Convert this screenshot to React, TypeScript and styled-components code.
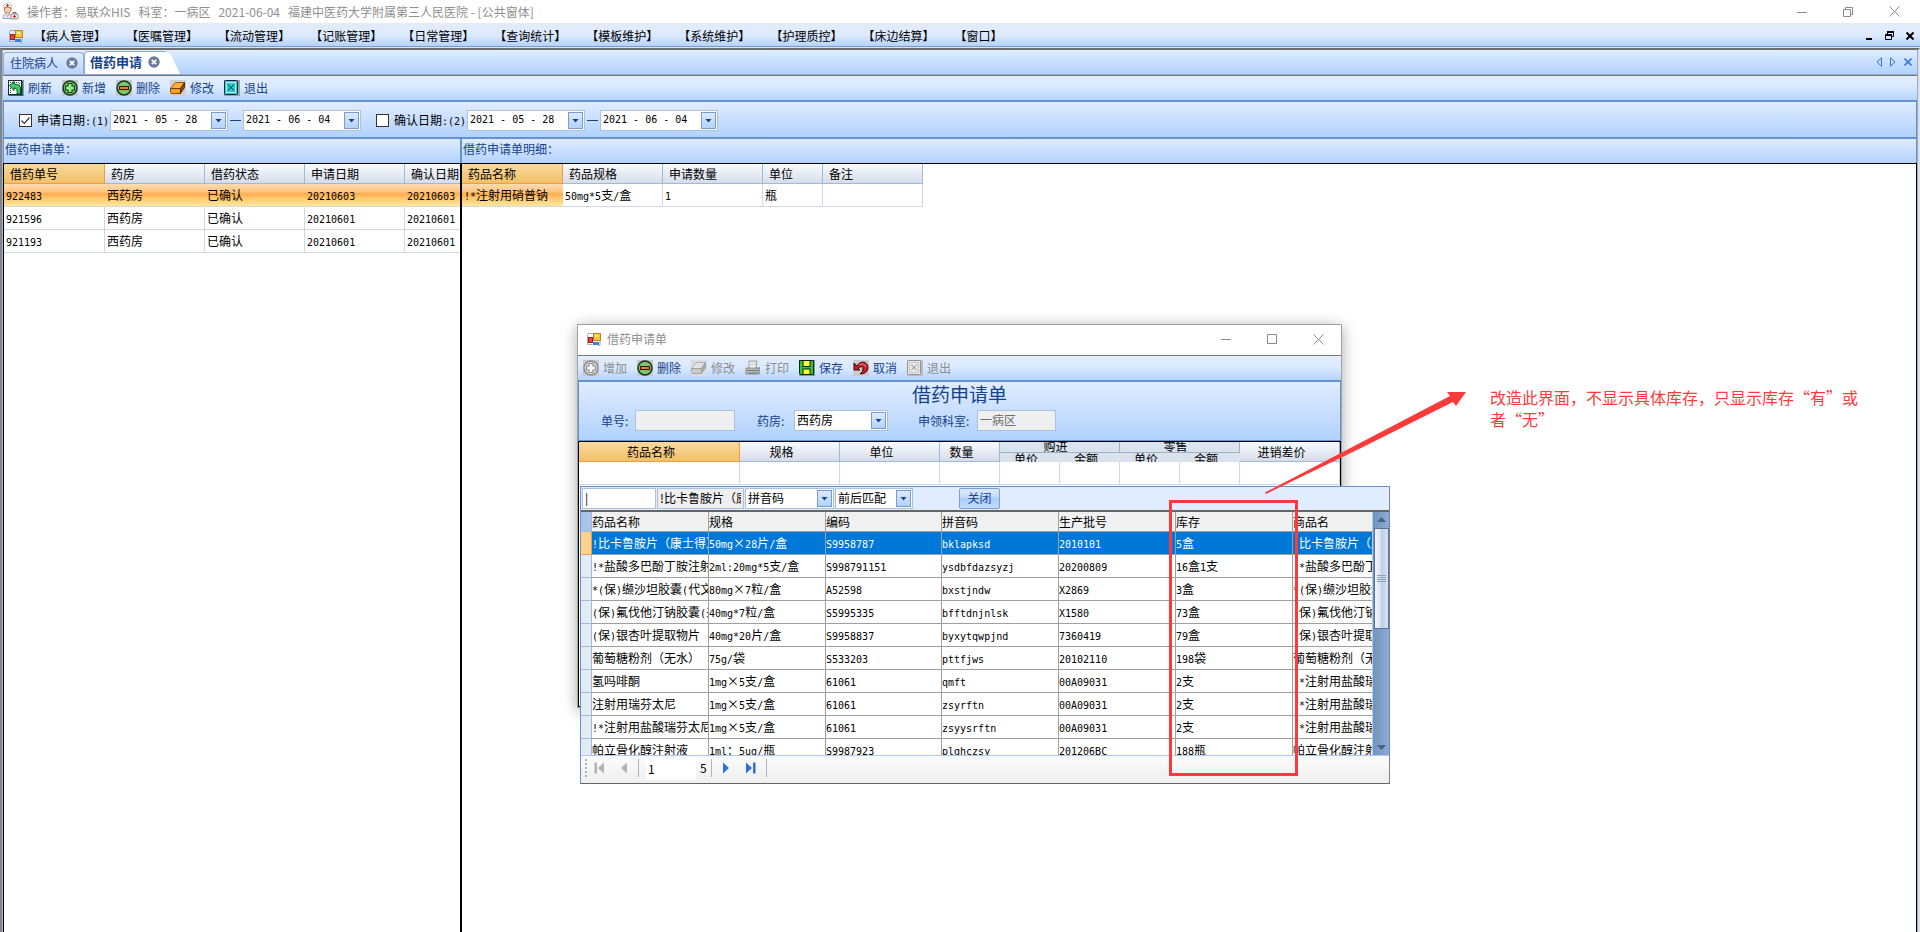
import React from "react";
import styled, { createGlobalStyle, css } from "styled-components";

const GlobalStyle = createGlobalStyle`
  *, *::before, *::after { box-sizing: border-box; }
  html, body { margin: 0; padding: 0; background: #fff; }
  body, button, input, select, table {
    font-family: "Noto Sans CJK SC", "Liberation Sans", sans-serif;
    font-size: 12px;
    line-height: 16px;
    color: #000;
  }
  button { padding: 0; margin: 0; border: 0; background: none; cursor: pointer; }
  svg { display: block; flex: none; }
`;

const navy = "#15428b";
const line = "#6593cf";
const panelFill = "linear-gradient(#e0ecff, #b1d2fe)";
const barFill = "linear-gradient(#e3eeff 0%, #dae9ff 50%, #b3d3fe 100%)";

/* ---------- text ---------- */

const Latin = styled.span`
  font-family: "DejaVu Sans Mono", monospace;
  font-size: 10px;
  line-height: 10px;
`;

function Mixed({ text }: { text: string }) {
  return (
    <>
      {text.split(/([\x21-\x7e]+)/).map((part, i) =>
        i % 2 ? <Latin key={i}>{part}</Latin> : part
      )}
    </>
  );
}

/* ---------- page frame ---------- */

const Page = styled.div`
  position: relative;
  display: flex;
  flex-direction: column;
  min-height: 100vh;
  overflow: hidden;
`;

const TitleBar = styled.header`
  display: flex;
  align-items: center;
  justify-content: space-between;
  height: 23px;
  padding: 0 20px 0 2px;
`;

const TitleText = styled.div`
  display: flex;
  align-items: center;
  gap: 8px;
  color: #8f8f8f;
  white-space: nowrap;
`;

const WindowButtons = styled.div<{ $gap: number }>`
  display: flex;
  align-items: center;
  gap: ${(p) => p.$gap}px;
  button { display: flex; }
`;

const MenuBar = styled.nav`
  display: flex;
  align-items: center;
  justify-content: space-between;
  height: 25px;
  padding: 0 6px 0 9px;
  background: linear-gradient(#e4ebf8 0, #dceaff 50%, #b4d3fc 23px, #6f9fd8 23px, #6f9fd8 24px, #e3e3e3 24px);
`;

const MenuItems = styled.div`
  display: flex;
  align-items: center;
  gap: 20px;
  svg { margin-right: -9px; }
  button { height: 22px; white-space: nowrap; }
`;

const Frame = styled.main`
  flex: 1;
  display: flex;
  flex-direction: column;
  border: solid;
  border-width: 2px 2px 0 2px;
  border-color: #6c6c6c #dfe1e6 #6c6c6c #858585;
`;

const Workspace = styled.div`
  flex: 1;
  display: flex;
  flex-direction: column;
  border-left: 1px solid #9db5da;
  border-right: 1px solid #98aac8;
`;

/* ---------- tabs ---------- */

const TabStrip = styled.div`
  display: flex;
  align-items: flex-end;
  justify-content: space-between;
  height: 25px;
  border-bottom: 1px solid #8fadd6;
  background: ${panelFill};
`;

const Tabs = styled.div`
  display: flex;
  align-items: flex-end;
`;

const Tab = styled.div<{ $active?: boolean }>`
  display: flex;
  align-items: center;
  gap: 8px;
  height: 22px;
  padding: 0 ${(p) => (p.$active ? 20 : 5)}px 2px ${(p) => (p.$active ? 5 : 6)}px;
  background: ${(p) => (p.$active ? "#fff" : "linear-gradient(#dfebfd, #b9d4fa)")};
  border: 1px solid #8fadd6;
  border-bottom: 0;
  border-radius: 4px 4px 0 0;
  ${(p) => p.$active && css`
    gap: 6px;
    height: 23px;
    border-right: 0;
    clip-path: polygon(0 0, calc(100% - 15px) 0, calc(100% - 9px) 4px, 100% 100%, 0 100%);
  `}
  & > button {
    color: ${navy};
    font-size: ${(p) => (p.$active ? 13 : 12)}px;
    font-weight: ${(p) => (p.$active ? 700 : 400)};
  }
`;

const TabTools = styled.div`
  display: flex;
  align-self: center;
  gap: 8px;
  padding-right: 5px;
  button { display: flex; }
`;

/* ---------- toolbars ---------- */

const ToolBar = styled.div`
  display: flex;
  align-items: center;
  gap: 10px;
  height: 27px;
  padding-left: 5px;
  border-top: 1px solid #777;
  border-bottom: 2px solid ${line};
  background: ${barFill};
`;

const ToolButton = styled.button`
  display: flex;
  align-items: center;
  gap: 4px;
  height: 22px;
  color: ${navy};
  white-space: nowrap;
  &:disabled { color: #8d8d8d; }
`;

/* ---------- form controls ---------- */

const FilterBar = styled.div`
  display: flex;
  align-items: center;
  height: 37px;
  padding: 1px 0 0 15px;
  border: solid ${line};
  border-width: 0 1px 2px 1px;
  background: ${panelFill};
`;

const DateGroup = styled.div`
  display: flex;
  align-items: center;
  margin-right: 15px;
`;

const CheckLabel = styled.label`
  display: flex;
  align-items: center;
  gap: 5px;
  width: 91px;
  white-space: nowrap;
`;

const CheckBox = styled.input`
  appearance: none;
  width: 13px;
  height: 13px;
  margin: 0;
  border: 1px solid #333;
  background: #fff;
  &:checked {
    background: #fff
      url("data:image/svg+xml,%3Csvg xmlns='http://www.w3.org/2000/svg' viewBox='0 0 11 11'%3E%3Cpath d='M1.5 5.5l2.800 2.800 5.200-5.800' fill='none' stroke='%23333' stroke-width='1.200'/%3E%3C/svg%3E")
      center / 11px 11px;
  }
`;

const Box = styled.div<{ $width: number }>`
  position: relative;
  display: flex;
  flex: none;
  width: ${(p) => p.$width}px;
  height: 21px;
  border: 1px solid #abc1de;
  background: #fff;
`;

const fieldReset = css`
  appearance: none;
  flex: 1;
  min-width: 0;
  height: 17px;
  padding: 0 18px 0 2px;
  border: 0;
  outline: 0;
  background: none;
`;

const DateInput = styled.input`
  ${fieldReset}
  font-family: "DejaVu Sans Mono", monospace;
  font-size: 10px;
`;

const Select = styled.select`
  ${fieldReset}
`;

const arrowLook = css`
  position: absolute;
  top: 1px;
  right: 1px;
  display: flex;
  align-items: center;
  justify-content: center;
  width: 15px;
  height: 17px;
  border: 1px solid #7a9cc8;
  background: linear-gradient(#dceaff, #b3d2ff);
`;

const ArrowButton = styled.button`${arrowLook}`;
const ArrowMark = styled.span`
  ${arrowLook}
  pointer-events: none;
`;

const Dash = styled.span`
  width: 11px;
  height: 1px;
  margin: 0 2px;
  background: ${navy};
`;

const TextInput = styled.input<{ $width: number }>`
  flex: none;
  width: ${(p) => p.$width}px;
  height: 21px;
  padding: 0 2px 3px;
  border: 1px solid #abc1de;
  outline: 0;
  background: #fff;
  &:read-only { background: #efefef; }
  &:disabled { background: #efefef; color: #6d6d6d; }
`;

const Down = () => (
  <svg width="7" height="5" viewBox="0 0 7 5"><path d="M0.500 1h6L3.500 4.500z" fill={navy} /></svg>
);

function DateBox({ value, label }: { value: string; label: string }) {
  return (
    <Box $width={118}>
      <DateInput defaultValue={value} aria-label={label} />
      <ArrowButton aria-label={label + " 选择"}><Down /></ArrowButton>
    </Box>
  );
}

function Combo({ value, width, id, label }: { value: string; width: number; id?: string; label?: string }) {
  return (
    <Box $width={width}>
      <Select id={id} aria-label={label} defaultValue={value}><option>{value}</option></Select>
      <ArrowMark><Down /></ArrowMark>
    </Box>
  );
}

/* ---------- panels and grids ---------- */

const Panels = styled.div`
  flex: 1;
  display: flex;
`;

const Panel = styled.section<{ $width?: number }>`
  display: flex;
  flex-direction: column;
  flex: ${(p) => (p.$width ? `0 0 ${p.$width}px` : "1 1 0")};
  min-width: 0;
  section + & > * { border-left-width: 2px; }
`;

const PanelTitle = styled.h2`
  height: 24px;
  margin: 0;
  padding: 0 0 0 1px;
  border: solid ${line};
  border-width: 0 0 0 1px;
  background: ${panelFill};
  color: ${navy};
  font-size: 12px;
  font-weight: 400;
  line-height: 20px;
  section:last-child > & { border-right-width: 1px; }
`;

const PanelBody = styled.div`
  flex: 1;
  overflow: hidden;
  border: solid #000;
  border-width: 1px 0 0 1px;
  section:last-child > & { border-right-width: 1px; }
`;

const Grid = styled.table`
  table-layout: fixed;
  width: 0;
  border-collapse: separate;
  border-spacing: 0;
  td, th {
    overflow: hidden;
    white-space: nowrap;
    font-weight: 400;
    text-align: left;
  }
`;

const orangeHead = css`
  border-color: #f29a45;
  background: linear-gradient(#f9d99f, #f1c166);
`;

const hotFill = "linear-gradient(#fbdcb4 0%, #ffc47e 35%, #ffad50 45%, #ffc870 65%, #ffe79c 100%)";

const Head = styled.th<{ $hot?: boolean; $center?: boolean }>`
  height: 20px;
  padding: ${(p) => (p.$center ? "1px 20px 0 4px" : "1px 6px 0")};
  border: solid #9fb9d8;
  border-width: 0 1px 1px 0;
  background: linear-gradient(#f9fbfd, #d6dcea);
  line-height: 18px;
  ${(p) => p.$hot && orangeHead}
  && { text-align: ${(p) => (p.$center ? "center" : "left")}; }
`;

const Cell = styled.td<{ $hot?: boolean }>`
  height: 23px;
  padding: 0 0 0 2px;
  border: solid #d0d7e5;
  border-width: 0 1px 1px 0;
  line-height: 20px;
  ${(p) => p.$hot && css`
    border-right-color: transparent;
    background: ${hotFill};
    background-clip: border-box;
  `}
`;

function Cols({ widths }: { widths: number[] }) {
  return <colgroup>{widths.map((w, i) => <col key={i} style={{ width: w }} />)}</colgroup>;
}

/* ---------- request window ---------- */

const Dialog = styled.section`
  position: absolute;
  left: 577px;
  top: 324px;
  display: flex;
  flex-direction: column;
  width: 765px;
  height: 384px;
  border: 1px solid #a3a3a3;
  background: #fff;
  box-shadow: 0 3px 14px rgba(0, 0, 0, 0.35);
`;

const DialogTitle = styled.div`
  display: flex;
  align-items: center;
  justify-content: space-between;
  height: 30px;
  padding: 0 17px 2px 9px;
  color: #8f8f8f;
  & > span { display: flex; align-items: center; gap: 6px; }
`;

const FormArea = styled.div`
  height: 59px;
  border: solid ${line};
  border-width: 0 1px 1px 1px;
  background: ${panelFill};
`;

const FormTitle = styled.h1`
  margin: 0;
  color: ${navy};
  font-size: 19px;
  font-weight: 400;
  line-height: 24px;
  text-align: center;
`;

const FormRow = styled.div`
  display: flex;
  padding: 4px 0 0 22px;
`;

const Field = styled.div<{ $gap: number; $label: number }>`
  display: flex;
  align-items: center;
  margin-right: ${(p) => p.$gap}px;
  label {
    width: ${(p) => p.$label}px;
    color: ${navy};
    white-space: nowrap;
  }
`;

const DialogBody = styled.div`
  flex: 1;
  overflow: hidden;
  border: 1px solid #000;
`;

const GroupHead = styled.th<{ $part: "top" | "bottom" }>`
  height: ${(p) => (p.$part === "top" ? 11 : 9)}px;
  padding: 0;
  border: solid #9fb0c4;
  border-width: ${(p) => (p.$part === "top" ? "0 1px 1px 0" : "0")};
  background: #dae2ee;
  && { text-align: center; }
  & > div {
    display: flex;
    justify-content: center;
    align-items: ${(p) => (p.$part === "top" ? "flex-end" : "flex-start")};
    height: ${(p) => (p.$part === "top" ? 10 : 9)}px;
    padding-right: 8px;
    overflow: hidden;
    line-height: 12px;
  }
`;

/* ---------- drug picker ---------- */

const Picker = styled.section`
  position: absolute;
  left: 580px;
  top: 486px;
  display: flex;
  flex-direction: column;
  width: 810px;
  height: 298px;
  border: solid;
  border-width: 1px;
  border-color: ${line} #6f86a8 #666 ${line};
  background: #e0ecff;
`;

const SearchBar = styled.div`
  display: flex;
  align-items: center;
  gap: 1px;
  height: 23px;
  padding: 0 1px;
`;

const CloseButton = styled.button`
  width: 41px;
  height: 21px;
  margin-left: 45px;
  padding-bottom: 2px;
  border: 1px solid #7a9fd0;
  border-radius: 2px;
  background: linear-gradient(#dbe8fd 0%, #c3dafc 45%, #aaccfb 50%, #c4dcff 100%);
  color: ${navy};
`;

const PickerView = styled.div`
  display: flex;
  height: 246px;
  border: solid #666;
  border-width: 2px 0 0 0;
  border-bottom: 1px solid #a9cbf5;
  background: #fff;
`;

const PickerGridClip = styled.div`
  flex: 1;
  overflow: hidden;
`;

const PickHead = styled.th`
  height: 20px;
  padding: 1px 0 0;
  border: solid #a0a0a0;
  border-width: 0 1px 1px 0;
  background: #f0f0f0;
  line-height: 18px;
`;

const PickCell = styled.td<{ $selected?: boolean }>`
  height: 23px;
  padding: 0;
  border: solid #a0a0a0;
  border-width: 0 1px 1px 0;
  line-height: 20px;
  ${(p) => p.$selected && css`
    background: #0078d7;
    color: #fff;
  `}
`;

const RowMark = styled.th<{ $kind?: "corner" | "current" }>`
  padding: 0;
  border: solid #9ebce0;
  border-width: 0 1px 1px 0;
  background: #e3ebf7;
  ${(p) => p.$kind === "corner" && css`background: #a9c4e9;`}
  ${(p) => p.$kind === "current" && css`
    border-color: #f29a45;
    background: #ffd28c;
  `}
`;

const ScrollTrack = styled.div`
  display: flex;
  flex-direction: column;
  align-items: center;
  width: 17px;
  padding: 5px 0;
  border-left: 1px solid #a9cbf5;
  background: linear-gradient(90deg, #7393be, #8cabd5);
`;

const ScrollThumb = styled.div`
  display: flex;
  align-items: center;
  justify-content: center;
  width: 15px;
  height: 101px;
  margin: 6px 0 auto;
  border: 1px solid #5c7396;
  background: linear-gradient(90deg, #f2f6fb, #dbe5f3 40%, #c0cfe4 50%, #d8e3f1);
`;

const Pager = styled.div`
  display: flex;
  align-items: center;
  height: 27px;
  padding: 0 0 3px 4px;
  background: linear-gradient(#fbfbfb, #efefef);
  button { display: flex; justify-content: center; width: 23px; }
  input {
    width: 50px;
    height: 23px;
    margin: 0 4px 0 3px;
    padding: 0 2px;
    border: 0;
    outline: 0;
    background: #fff;
  }
`;

const Rule = styled.span`
  width: 1px;
  height: 18px;
  margin: 0 4px;
  background: #b5b5b5;
`;

/* ---------- review note ---------- */

const Highlight = styled.div`
  position: absolute;
  left: 1169px;
  top: 500px;
  width: 129px;
  height: 276px;
  border: 3px solid #fb3b3b;
`;

const ArrowDrawing = styled.svg`
  position: absolute;
  left: 1260px;
  top: 388px;
`;

const Note = styled.p`
  position: absolute;
  left: 1490px;
  top: 386px;
  width: 370px;
  margin: 0;
  color: #fb3b3b;
  font-size: 16px;
  line-height: 22px;
`;

/* ---------- icons ---------- */

const FormIcon = () => (
  <svg width="14" height="14" viewBox="0 0 14 14">
    <path d="M1 1.500h5M0.500 2v10.500h5M13 9v4.500h-2" fill="none" stroke="#a9a9a9" />
    <rect x="1.500" y="5.500" width="4" height="5" fill="#e04a3c" stroke="#a81e16" />
    <rect x="6.500" y="1.500" width="7" height="7" fill="#f9c62f" stroke="#b58a1c" />
    <rect x="8" y="3" width="3" height="2" fill="#ffeaa0" />
    <rect x="6" y="10" width="6" height="3" fill="#3f7ce0" />
  </svg>
);

const NurseIcon = () => (
  <svg width="17" height="17" viewBox="0 0 17 17">
    <path d="M1.500 4.500q-.5-3 2.500-4 3-1 5.500 1.500l-.5 3q-4-2-7.500-.5z" fill="#fff" stroke="#a9b4c0" strokeWidth="0.800" />
    <path d="M4 2.500h3M5.500 1v3" stroke="#e03030" />
    <path d="M2.500 5q3-1.800 6.500 0 .8 5-3.300 5T2.500 5z" fill="#f6cfae" stroke="#9b6238" strokeWidth="0.800" />
    <path d="M1 15.500q-.3-5 4.500-5.500 4.500.5 4.700 5.500z" fill="#dfeaf4" stroke="#7d97b3" strokeWidth="0.800" />
    <path d="M4 10.500l1.700 3 1.600-3" fill="#fff" stroke="#d45a4a" strokeWidth="0.700" />
    <path d="M11 11V9.500h3V11" fill="none" stroke="#666" />
    <rect x="9" y="11" width="7" height="5" rx="1" fill="#ededed" stroke="#777" strokeWidth="0.800" />
    <path d="M12.500 12v3M11 13.500h3" stroke="#d22" />
  </svg>
);

const Minimize = () => (
  <svg width="10" height="10" viewBox="0 0 10 10"><path d="M0 5.500h10" stroke="#8a8a8a" /></svg>
);
const Restore = () => (
  <svg width="10" height="10" viewBox="0 0 10 10">
    <path d="M0.500 2.500h7v7h-7zM2.500 2.500v-2h7v7h-2" fill="none" stroke="#8a8a8a" />
  </svg>
);
const Maximize = () => (
  <svg width="10" height="10" viewBox="0 0 10 10"><path d="M0.500 0.500h9v9h-9z" fill="none" stroke="#8a8a8a" /></svg>
);
const Close = () => (
  <svg width="11" height="11" viewBox="0 0 11 11"><path d="M0.500 0.500l10 10M10.500 0.500l-10 10" stroke="#8a8a8a" /></svg>
);
const MdiMinimize = () => (
  <svg width="8" height="10" viewBox="0 0 8 10"><path d="M1 8h6" stroke="#000" strokeWidth="2" /></svg>
);
const MdiRestore = () => (
  <svg width="9" height="9" viewBox="0 0 9 9">
    <path d="M0.500 4.500h6v4h-6zM2.500 3V0.500h6v5H7" fill="none" stroke="#000" />
    <path d="M0 4h7M2 1h7" stroke="#000" strokeWidth="2" />
  </svg>
);
const MdiClose = () => (
  <svg width="8" height="8" viewBox="0 0 8 8"><path d="M0.500 0.500l7 7M7.500 0.500l-7 7" stroke="#000" strokeWidth="2" /></svg>
);
const TabClose = () => (
  <svg width="12" height="12" viewBox="0 0 12 12">
    <circle cx="6" cy="6" r="5.700" fill="#6b7c99" />
    <path d="M3.800 3.800l4.400 4.400M8.200 3.800l-4.400 4.400" stroke="#fff" strokeWidth="1.800" />
  </svg>
);
const TabArrow = ({ left }: { left?: boolean }) => (
  <svg width="6" height="10" viewBox="0 0 6 10">
    <path d={left ? "M5.500 0.800v8.400L1 5z" : "M0.500 0.800v8.400L5 5z"} fill="none" stroke="#2f78dc" />
  </svg>
);
const TabX = () => (
  <svg width="8" height="10" viewBox="0 0 8 10"><path d="M0.500 1.500l7 7M7.500 1.500l-7 7" stroke="#2f78dc" strokeWidth="1.600" /></svg>
);

const Icon = ({ children }: { children: React.ReactNode }) => (
  <svg width="16" height="16" viewBox="0 0 16 16">{children}</svg>
);
const RefreshIcon = () => (
  <Icon>
    <rect width="16" height="16" fill="#8b9ea3" />
    <rect x="0.500" y="0.500" width="13" height="14" fill="#fff" stroke="#1d2b30" />
    <path d="M2 2.500h10M11.500 3v4M2.500 8v5" stroke="#444" strokeDasharray="1 1" />
    <path d="M1.500 5.500L6 1.500V4q6 0 6.500 4v6H9q1-6-3-6v2.500z" fill="#2ed45e" stroke="#0a3d1b" strokeWidth="0.900" />
    <path d="M14.500 1v14M1 15.500h14" stroke="#2d6a78" />
  </Icon>
);
const AddIcon = ({ off }: { off?: boolean }) => (
  <Icon>
    <rect width="16" height="16" fill="#c4c8cc" />
    <circle cx="8" cy="8" r="7" fill={off ? "#dedede" : "#7cc36a"} stroke={off ? "#8b8b8b" : "#15331a"} strokeWidth="1.500" />
    <path d="M6 3.500h4V6h2.500v4H10v2.500H6V10H3.500V6H6z" fill={off ? "#f3f3f3" : "#8ff08a"} stroke={off ? "#8b8b8b" : "#123a14"} strokeWidth="1.100" />
  </Icon>
);
const RemoveIcon = () => (
  <Icon>
    <rect width="16" height="16" fill="#c4c8cc" />
    <circle cx="8" cy="8" r="7" fill="#7fc467" stroke="#15331a" strokeWidth="1.500" />
    <rect x="3.500" y="6.500" width="9" height="3" fill="#f07a1c" stroke="#2d1405" />
  </Icon>
);
const EraseIcon = ({ off }: { off?: boolean }) => (
  <Icon>
    <rect width="16" height="16" fill={off ? "#d9dde3" : "#d3d0cc"} />
    <path d="M5.500 2.500h9l-4 6h-10z" fill={off ? "#e3e3e3" : "#ffae35"} stroke={off ? "#a5a5a5" : "#7a4508"} strokeWidth="0.800" />
    <path d="M0.500 8.500h10v5h-9l-1-1z" fill={off ? "#c9c9c9" : "#f99f1f"} stroke={off ? "#999" : "#5b3206"} strokeWidth="0.800" />
    <path d="M14.500 2.500v5l-4 6v-5z" fill={off ? "#adadad" : "#8f4c08"} stroke={off ? "#999" : "#3b1f03"} strokeWidth="0.800" />
  </Icon>
);
const ExitIcon = ({ off }: { off?: boolean }) => (
  <Icon>
    <rect width="16" height="16" fill={off ? "#bdbdbd" : "#8fa3ab"} />
    <rect x="0.500" y="0.500" width="13" height="14" rx="1" fill={off ? "#e9e9e9" : "#38c6cf"} stroke={off ? "#909090" : "#0b2b38"} />
    <rect x="2.500" y="2.500" width="9" height="10" fill="none" stroke={off ? "#c9c9c9" : "#9df2f2"} />
    <path d="M4 4.500l6 6M10 4.500l-6 6" stroke={off ? "#8a8a8a" : "#08343e"} />
  </Icon>
);
const PrintIcon = () => (
  <Icon>
    <path d="M4 8V1h8l-1 7" fill="#fafafa" stroke="#9a9a9a" />
    <path d="M5.500 3h5M5.500 5h5" stroke="#8a8a8a" strokeDasharray="1 1" />
    <path d="M1 8h13v6H1z" fill="#b9b9b9" stroke="#8b8b8b" />
    <path d="M2 10.500h11M3 13h9" stroke="#777" />
    <path d="M14.500 7v7" stroke="#9b9b9b" />
  </Icon>
);
const SaveIcon = () => (
  <Icon>
    <rect width="16" height="16" fill="#8d948d" />
    <path d="M0.500 0.500h14v14h-13l-1-1z" fill="#35c435" stroke="#032a05" />
    <rect x="4" y="0.500" width="7" height="6" fill="#ffff38" stroke="#032a05" />
    <rect x="4" y="9" width="7" height="5.500" fill="#ffff38" stroke="#032a05" />
  </Icon>
);
const UndoIcon = () => (
  <Icon>
    <rect width="16" height="16" fill="#cfcac8" />
    <path d="M1 3v7h6L5 8q5-3 5 1 0 3-3 5 7 0 8-6 0-5-5-6-4 0-6 4z" fill="#c9202c" stroke="#2a0508" strokeWidth="0.900" />
    <path d="M6 5q5-3 7 2" stroke="#f0878c" fill="none" />
  </Icon>
);
const PagerIcon = ({ flip, bar, off }: { flip?: boolean; bar?: boolean; off?: boolean }) => (
  <svg width="11" height="12" viewBox="0 0 11 12">
    <g transform={flip ? "translate(11 0) scale(-1 1)" : undefined} fill={off ? "#b3b3b3" : "#2f6fe0"}>
      <path d="M1 0.500L7 6l-6 5.500z" />
      {bar && <rect x="8" y="0.500" width="2.500" height="11" />}
    </g>
  </svg>
);
const ScrollArrow = ({ up }: { up?: boolean }) => (
  <svg width="9" height="5" viewBox="0 0 9 5"><path d={up ? "M0 5h9L4.500 0z" : "M0 0h9L4.500 5z"} fill="#4c6185" /></svg>
);

/* ---------- data ---------- */

const menus = ["病人管理", "医嘱管理", "流动管理", "记账管理", "日常管理", "查询统计", "模板维护", "系统维护", "护理质控", "床边结算", "窗口"];

const requestHeads = ["借药单号", "药房", "借药状态", "申请日期", "确认日期"];
const requests = [
  ["922483", "西药房", "已确认", "20210603", "20210603"],
  ["921596", "西药房", "已确认", "20210601", "20210601"],
  ["921193", "西药房", "已确认", "20210601", "20210601"],
];

const detailHeads = ["药品名称", "药品规格", "申请数量", "单位", "备注"];
const detail = ["!*注射用硝普钠", "50mg*5支/盒", "1", "瓶", ""];

const pickHeads = ["药品名称", "规格", "编码", "拼音码", "生产批号", "库存", "商品名"];
const drugs = [
  ["!比卡鲁胺片（康士得）", "50mg×28片/盒", "S9958787", "bklapksd", "2010101", "5盒", "!比卡鲁胺片（康士得）"],
  ["!*盐酸多巴酚丁胺注射液", "2ml:20mg*5支/盒", "S998791151", "ysdbfdazsyzj", "20200809", "16盒1支", "!*盐酸多巴酚丁胺注射液"],
  ["*(保)缬沙坦胶囊(代文)", "80mg×7粒/盒", "A52598", "bxstjndw", "X2869", "3盒", "*(保)缬沙坦胶囊(代文)"],
  ["(保)氟伐他汀钠胶囊(来适可)", "40mg*7粒/盒", "S5995335", "bfftdnjnlsk", "X1580", "73盒", "(保)氟伐他汀钠胶囊"],
  ["(保)银杏叶提取物片（金纳多）", "40mg*20片/盒", "S9958837", "byxytqwpjnd", "7360419", "79盒", "(保)银杏叶提取物片"],
  ["葡萄糖粉剂（无水）", "75g/袋", "S533203", "pttfjws", "20102110", "198袋", "葡萄糖粉剂（无水）"],
  ["氢吗啡酮", "1mg×5支/盒", "61061", "qmft", "00A09031", "2支", "!*注射用盐酸瑞芬太尼"],
  ["注射用瑞芬太尼", "1mg×5支/盒", "61061", "zsyrftn", "00A09031", "2支", "!*注射用盐酸瑞芬太尼"],
  ["!*注射用盐酸瑞芬太尼", "1mg×5支/盒", "61061", "zsyysrftn", "00A09031", "2支", "!*注射用盐酸瑞芬太尼"],
  ["帕立骨化醇注射液", "1ml：5ug/瓶", "S9987923", "plghczsy", "201206BC", "188瓶", "帕立骨化醇注射液"],
];

/* ---------- sections ---------- */

function DateRange({ id, label, checked }: { id: string; label: string; checked: boolean }) {
  return (
    <DateGroup>
      <CheckLabel htmlFor={id}>
        <CheckBox id={id} type="checkbox" defaultChecked={checked} />
        <span><Mixed text={label} /></span>
      </CheckLabel>
      <DateBox value="2021 - 05 - 28" label={label + " 起"} />
      <Dash />
      <DateBox value="2021 - 06 - 04" label={label + " 止"} />
    </DateGroup>
  );
}

function RequestDialog() {
  return (
    <Dialog aria-label="借药申请单">
      <DialogTitle>
        <span><FormIcon />借药申请单</span>
        <WindowButtons $gap={36}>
          <button aria-label="最小化"><Minimize /></button>
          <button aria-label="最大化"><Maximize /></button>
          <button aria-label="关闭窗口"><Close /></button>
        </WindowButtons>
      </DialogTitle>
      <ToolBar>
        <ToolButton disabled><AddIcon off />增加</ToolButton>
        <ToolButton><RemoveIcon />删除</ToolButton>
        <ToolButton disabled><EraseIcon off />修改</ToolButton>
        <ToolButton disabled><PrintIcon />打印</ToolButton>
        <ToolButton><SaveIcon />保存</ToolButton>
        <ToolButton><UndoIcon />取消</ToolButton>
        <ToolButton disabled><ExitIcon off />退出</ToolButton>
      </ToolBar>
      <FormArea>
        <FormTitle>借药申请单</FormTitle>
        <FormRow>
          <Field $gap={22} $label={34}>
            <label htmlFor="order-no">单号:</label>
            <TextInput id="order-no" $width={100} disabled />
          </Field>
          <Field $gap={30} $label={37}>
            <label htmlFor="pharmacy">药房:</label>
            <Combo id="pharmacy" value="西药房" width={94} />
          </Field>
          <Field $gap={0} $label={59}>
            <label htmlFor="dept">申领科室:</label>
            <TextInput id="dept" $width={79} defaultValue="一病区" disabled />
          </Field>
        </FormRow>
      </FormArea>
      <DialogBody>
        <Grid>
          <Cols widths={[161, 100, 100, 60, 60, 60, 60, 60, 100]} />
          <thead>
            <tr>
              <Head rowSpan={2} $hot $center>药品名称</Head>
              <Head rowSpan={2} $center>规格</Head>
              <Head rowSpan={2} $center>单位</Head>
              <Head rowSpan={2} $center>数量</Head>
              <GroupHead colSpan={2} $part="top"><div>购进</div></GroupHead>
              <GroupHead colSpan={2} $part="top"><div>零售</div></GroupHead>
              <Head rowSpan={2} $center>进销差价</Head>
            </tr>
            <tr>
              {["单价", "金额", "单价", "金额"].map((t, i) => (
                <GroupHead key={i} $part="bottom"><div>{t}</div></GroupHead>
              ))}
            </tr>
          </thead>
          <tbody>
            <tr>{Array.from({ length: 9 }, (_, i) => <Cell key={i} />)}</tr>
          </tbody>
        </Grid>
      </DialogBody>
    </Dialog>
  );
}

function DrugPicker() {
  return (
    <Picker aria-label="药品选择">
      <SearchBar>
        <TextInput $width={74} defaultValue="|" aria-label="检索" />
        <TextInput $width={87} defaultValue="!比卡鲁胺片（康士得）" readOnly aria-label="当前药品" />
        <Combo value="拼音码" width={89} label="检索方式" />
        <Combo value="前后匹配" width={78} label="匹配方式" />
        <CloseButton>关闭</CloseButton>
      </SearchBar>
      <PickerView>
        <PickerGridClip>
          <Grid>
            <Cols widths={[11, 117, 117, 116, 117, 117, 117, 117]} />
            <thead>
              <tr>
                <RowMark $kind="corner" />
                {pickHeads.map((h) => <PickHead key={h}>{h}</PickHead>)}
              </tr>
            </thead>
            <tbody>
              {drugs.map((row, r) => (
                <tr key={r}>
                  <RowMark $kind={r === 0 ? "current" : undefined} />
                  {row.map((v, c) => <PickCell key={c} $selected={r === 0}><Mixed text={v} /></PickCell>)}
                </tr>
              ))}
            </tbody>
          </Grid>
        </PickerGridClip>
        <ScrollTrack>
          <ScrollArrow up />
          <ScrollThumb>
            <svg width="9" height="7" viewBox="0 0 9 7"><path d="M0 0.500h9M0 2.500h9M0 4.500h9M0 6.500h9" stroke="#8da3c4" /></svg>
          </ScrollThumb>
          <ScrollArrow />
        </ScrollTrack>
      </PickerView>
      <Pager>
        <svg width="3" height="20" viewBox="0 0 3 20"><path d="M1 1v18" stroke="#b5b5b5" strokeWidth="2" strokeDasharray="2 2" /></svg>
        <button aria-label="首页"><PagerIcon flip bar off /></button>
        <button aria-label="上一页"><PagerIcon flip off /></button>
        <Rule />
        <input defaultValue="1" aria-label="页码" />
        <span>5</span>
        <Rule />
        <button aria-label="下一页"><PagerIcon /></button>
        <button aria-label="末页"><PagerIcon bar /></button>
        <Rule />
      </Pager>
    </Picker>
  );
}

export default function App() {
  return (
    <Page>
      <GlobalStyle />
      <TitleBar>
        <TitleText>
          <NurseIcon />
          <span>操作者：易联众HIS</span>
          <span>科室：一病区</span>
          <span>2021-06-04</span>
          <span>福建中医药大学附属第三人民医院 - [公共窗体]</span>
        </TitleText>
        <WindowButtons $gap={36}>
          <button aria-label="最小化"><Minimize /></button>
          <button aria-label="还原"><Restore /></button>
          <button aria-label="关闭"><Close /></button>
        </WindowButtons>
      </TitleBar>
      <MenuBar>
        <MenuItems>
          <FormIcon />
          {menus.map((m) => <button key={m}>【{m}】</button>)}
        </MenuItems>
        <WindowButtons $gap={12}>
          <button aria-label="最小化子窗口"><MdiMinimize /></button>
          <button aria-label="还原子窗口"><MdiRestore /></button>
          <button aria-label="关闭子窗口"><MdiClose /></button>
        </WindowButtons>
      </MenuBar>
      <Frame>
        <Workspace>
          <TabStrip>
            <Tabs>
              <Tab><button>住院病人</button><button aria-label="关闭住院病人"><TabClose /></button></Tab>
              <Tab $active><button>借药申请</button><button aria-label="关闭借药申请"><TabClose /></button></Tab>
            </Tabs>
            <TabTools>
              <button aria-label="向左"><TabArrow left /></button>
              <button aria-label="向右"><TabArrow /></button>
              <button aria-label="关闭标签"><TabX /></button>
            </TabTools>
          </TabStrip>
          <ToolBar>
            <ToolButton><RefreshIcon />刷新</ToolButton>
            <ToolButton><AddIcon />新增</ToolButton>
            <ToolButton><RemoveIcon />删除</ToolButton>
            <ToolButton><EraseIcon />修改</ToolButton>
            <ToolButton><ExitIcon />退出</ToolButton>
          </ToolBar>
          <FilterBar>
            <DateRange id="apply-date" label="申请日期:(1)" checked />
            <DateRange id="confirm-date" label="确认日期:(2)" checked={false} />
          </FilterBar>
          <Panels>
            <Panel $width={457}>
              <PanelTitle>借药申请单：</PanelTitle>
              <PanelBody>
                <Grid>
                  <Cols widths={[101, 100, 100, 100, 100]} />
                  <thead>
                    <tr>{requestHeads.map((h, i) => <Head key={h} $hot={i === 0}>{h}</Head>)}</tr>
                  </thead>
                  <tbody>
                    {requests.map((row, r) => (
                      <tr key={r}>{row.map((v, c) => <Cell key={c} $hot={r === 0}><Mixed text={v} /></Cell>)}</tr>
                    ))}
                  </tbody>
                </Grid>
              </PanelBody>
            </Panel>
            <Panel>
              <PanelTitle>借药申请单明细：</PanelTitle>
              <PanelBody>
                <Grid>
                  <Cols widths={[101, 100, 100, 60, 100]} />
                  <thead>
                    <tr>{detailHeads.map((h, i) => <Head key={h} $hot={i === 0}>{h}</Head>)}</tr>
                  </thead>
                  <tbody>
                    <tr>{detail.map((v, c) => <Cell key={c} $hot={c === 0}><Mixed text={v} /></Cell>)}</tr>
                  </tbody>
                </Grid>
              </PanelBody>
            </Panel>
          </Panels>
        </Workspace>
      </Frame>
      <RequestDialog />
      <DrugPicker />
      <Highlight />
      <ArrowDrawing width="210" height="110" viewBox="0 0 210 110">
        <path d="M5 104.500L190 8l-3-4h19l-10 14-3-4L101 60 6 106z" fill="#fb3b3b" />
      </ArrowDrawing>
      <Note>改造此界面，不显示具体库存，只显示库存“有”或者“无”</Note>
    </Page>
  );
}
